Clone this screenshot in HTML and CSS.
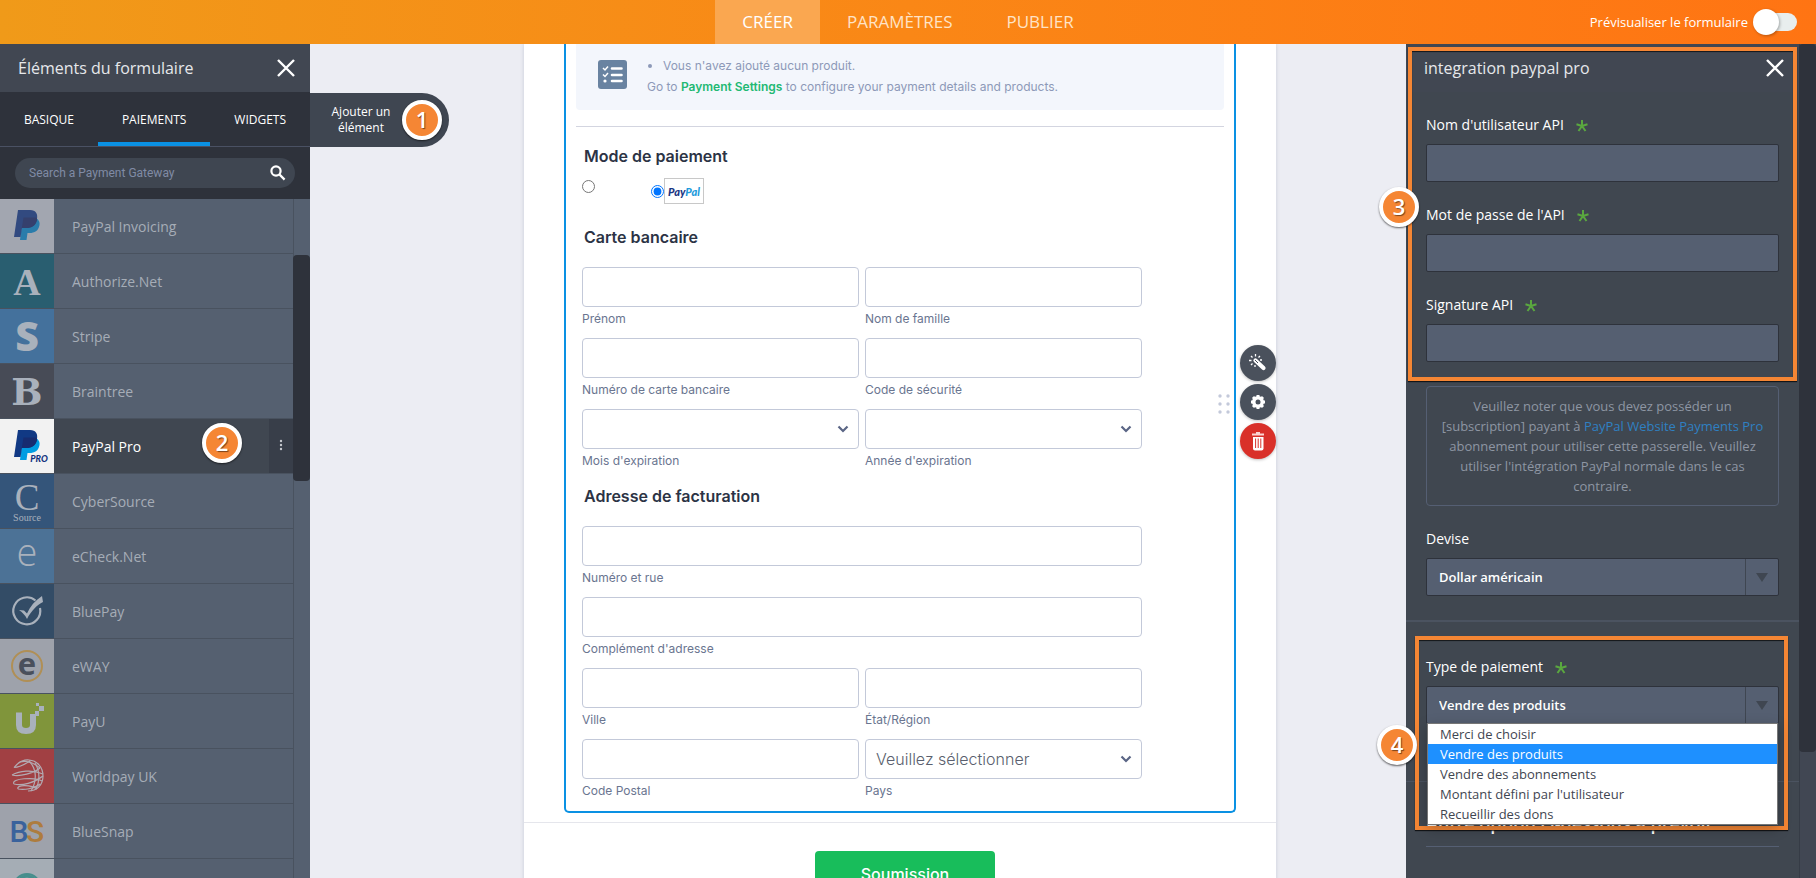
FILE: index.html
```html
<!DOCTYPE html>
<html lang="fr">
  <head>
    <meta charset="UTF-8" />
    <meta name="viewport" content="width=device-width, initial-scale=1.0" />
    <title>Créer un formulaire</title>
    <link rel="stylesheet" href="styles.css">
  </head>
  <body>
    <header class="topbar">
      <nav class="topnav">
        <a href="#" class="active">CRÉER</a>
        <a href="#">PARAMÈTRES</a>
        <a href="#">PUBLIER</a>
      </nav>
      <label class="preview">
        Prévisualiser le formulaire
        <input type="checkbox" class="toggle" />
      </label>
    </header>

    <div class="workspace">
      <!-- left panel -->
      <aside class="elements">
        <div class="panel-head">
          <h2>Éléments du formulaire</h2>
          <button class="close" aria-label="Fermer">
            <svg width="18" height="18" viewBox="0 0 18 18"><path d="M1 1L17 17M17 1L1 17" /></svg>
          </button>
        </div>
        <div class="tabs">
          <button>BASIQUE</button>
          <button class="active">PAIEMENTS</button>
          <button>WIDGETS</button>
        </div>
        <div class="search">
          <input type="text" placeholder="Search a Payment Gateway" aria-label="Search a Payment Gateway" />
          <svg width="16" height="16" viewBox="0 0 16 16"><circle cx="6" cy="6" r="4.6" /><path d="M9.6 9.6L14.6 14.6" /></svg>
        </div>
        <div class="gateways">
          <ul class="gateway-list">
            <li>
              <svg class="logo" viewBox="0 0 54 54">
                <rect width="54" height="54" fill="#a2a6b0" />
                <path d="M36 19c3 2 4 4 3.500 7-1 6-5 8-10 8h-2l-1 7h-6.500l2.500-20z" fill="#2a7cab" />
                <path d="M18 11h12c6 0 8 4 7 9-1 6-5 9-11 9h-4l-1.500 9H14z" fill="#324a80" />
                <path d="M23.500 18.500H35c2 0 2.300 1 2 2.500-1 5.500-5 8-11 8h-4.200z" fill="#35406d" />
              </svg>
              <span>PayPal Invoicing</span>
            </li>
            <li>
              <svg class="logo" viewBox="0 0 54 54">
                <rect width="54" height="54" fill="#295e70" />
                <text x="27" y="41" class="serif bold" font-size="38">A</text>
              </svg>
              <span>Authorize.Net</span>
            </li>
            <li>
              <svg class="logo" viewBox="0 0 54 54">
                <rect width="54" height="54" fill="#44719c" />
                <text x="27" y="42" class="heavy" font-size="41">S</text>
              </svg>
              <span>Stripe</span>
            </li>
            <li>
              <svg class="logo" viewBox="0 0 54 54">
                <rect width="54" height="54" fill="#474b56" />
                <text x="27" y="41" class="slab" font-size="37">B</text>
              </svg>
              <span>Braintree</span>
            </li>
            <li class="selected">
              <svg class="logo" viewBox="0 0 54 54">
                <rect width="54" height="54" fill="#f2f2f2" />
                <path d="M36 19c3 2 4 4 3.500 7-1 6-5 8-10 8h-2l-1 7h-6.500l2.500-20z" fill="#009de2" />
                <path d="M18 11h12c6 0 8 4 7 9-1 6-5 9-11 9h-4l-1.500 9H14z" fill="#113984" />
                <path d="M23.500 18.500H35c2 0 2.300 1 2 2.500-1 5.500-5 8-11 8h-4.200z" fill="#172c70" />
                <text x="39" y="43" class="pro" font-size="9">PRO</text>
              </svg>
              <span>PayPal Pro</span>
              <b class="badge badge-row">2</b>
              <button class="more" aria-label="Plus">
                <svg width="4" height="12" viewBox="0 0 4 12"><circle cx="2" cy="2" r="1.200" /><circle cx="2" cy="6" r="1.200" /><circle cx="2" cy="10" r="1.200" /></svg>
              </button>
            </li>
            <li>
              <svg class="logo" viewBox="0 0 54 54">
                <rect width="54" height="54" fill="#34557a" />
                <text x="27" y="36" class="serif" font-size="37">C</text>
                <text x="27" y="47" class="serif" font-size="10">Source</text>
              </svg>
              <span>CyberSource</span>
            </li>
            <li>
              <svg class="logo" viewBox="0 0 54 54">
                <rect width="54" height="54" fill="#4c7296" />
                <text x="27" y="37" class="thin" font-size="38">e</text>
              </svg>
              <span>eCheck.Net</span>
            </li>
            <li>
              <svg class="logo" viewBox="0 0 54 54">
                <rect width="54" height="54" fill="#334c66" />
                <path d="M35.500 16.500A13.500 13.500 0 1 0 40 24" fill="none" stroke="#a9b1bc" stroke-width="2.200" />
                <path d="M19 26l5 .5 3 3c3-7 8-13 15-17.500l1 6C37 21 31 27 27 35c-2-4-4-6-8-9z" fill="#a9b1bc" />
              </svg>
              <span>BluePay</span>
            </li>
            <li>
              <svg class="logo" viewBox="0 0 54 54">
                <rect width="54" height="54" fill="#9ea2ab" />
                <circle cx="27" cy="27" r="15" fill="none" stroke="#b08f55" stroke-width="2" />
                <text x="27" y="36" class="eway" font-size="31">e</text>
              </svg>
              <span>eWAY</span>
            </li>
            <li>
              <svg class="logo" viewBox="0 0 54 54">
                <rect width="54" height="54" fill="#80953b" />
                <path d="M19 18.500V31c0 4 2.500 6 7 6s7-2 7-6V20" fill="none" stroke="#a9b1bc" stroke-width="6" />
                <path d="M36 9h3v3h-3zM39 12h5v5h-5zM35 17h4v5h-4z" fill="#a9b1bc" />
              </svg>
              <span>PayU</span>
            </li>
            <li>
              <svg class="logo" viewBox="0 0 54 54">
                <rect width="54" height="54" fill="#a14043" />
                <g fill="none" stroke="#b3aab2" stroke-width="1.200">
                  <path d="M14 18.500c6 0 12-4 16-6.500M14 18.500c4-5 9-8 15-7.500 8 .5 14 7 14 16s-6 15-15 15" />
                  <path d="M20 13c8-2 14 1 20 6" />
                  <path d="M12 26c8 2 22-2 28-7M12 26c7-4 20-6 31-1" />
                  <path d="M14 35c-4-6 22-7 28-3M14 35c8 2 20-1 29-8" />
                  <path d="M18 40c-2-5 14-4 19 0M18 40c6 1 16 0 22-5" />
                  <path d="M29 12c8 8 8 20 2 30M35 14c5 8 5 18 1 26" />
                </g>
              </svg>
              <span>Worldpay UK</span>
            </li>
            <li>
              <svg class="logo" viewBox="0 0 54 54">
                <rect width="54" height="54" fill="#9ea2ab" />
                <text x="19" y="38" class="snap" font-size="30" fill="#3a629c">B</text>
                <text x="35" y="38" class="snap" font-size="30" fill="#ad7c3e">S</text>
              </svg>
              <span>BlueSnap</span>
            </li>
            <li>
              <svg class="logo" viewBox="0 0 54 54">
                <rect width="54" height="54" fill="#a5adb5" />
                <g fill="none" stroke="#478e8c" stroke-width="2">
                  <circle cx="27" cy="28" r="13" />
                  <path d="M18 22c5-6 14-6 19 2M20 19c6-5 14-2 17 4" />
                </g>
              </svg>
              <span></span>
            </li>
          </ul>
          <div class="scroll scroll-left"></div>
        </div>
        <button class="add-element">
          <span>Ajouter un élément</span>
          <b class="badge">1</b>
        </button>
      </aside>

      <!-- form -->
      <main class="stage">
        <form class="form-card">
          <div class="question">
            <div class="notice">
              <svg width="29" height="29" viewBox="0 0 29 29">
                <rect width="29" height="29" rx="3" fill="#6983a1" />
                <path d="M5 8l2 2 3-3.500M5 14.500l2 2 3-3.500" fill="none" stroke="#fff" stroke-width="1.500" />
                <path d="M14 8.500h9.500M14 15h9.500M14 21h9.500" stroke="#fff" stroke-width="2.600" stroke-linecap="round" />
                <circle cx="7" cy="21" r="1.600" fill="#fff" />
              </svg>
              <div>
                <ul>
                  <li>Vous n'avez ajouté aucun produit.</li>
                </ul>
                <p>Go to <a href="#">Payment Settings</a> to configure your payment details and products.</p>
              </div>
            </div>
            <hr />
            <div class="fields">
              <h3>Mode de paiement</h3>
              <div class="methods">
                <input type="radio" name="method" aria-label="Carte bancaire" />
                <label>
                  <input type="radio" name="method" checked />
                  <span class="paypal"><i>Pay</i><i>Pal</i></span>
                </label>
              </div>
              <h3>Carte bancaire</h3>
              <div class="grid">
                <label><input type="text" />Prénom</label>
                <label><input type="text" />Nom de famille</label>
                <label><input type="text" />Numéro de carte bancaire</label>
                <label><input type="text" />Code de sécurité</label>
                <label>
                  <span class="drop"><select><option></option></select><svg width="12" height="8" viewBox="0 0 12 8"><path d="M1.500 1.500L6 6L10.500 1.500" /></svg></span>
                  Mois d'expiration
                </label>
                <label>
                  <span class="drop"><select><option></option></select><svg width="12" height="8" viewBox="0 0 12 8"><path d="M1.500 1.500L6 6L10.500 1.500" /></svg></span>
                  Année d'expiration
                </label>
              </div>
              <h3>Adresse de facturation</h3>
              <div class="grid">
                <label class="wide"><input type="text" />Numéro et rue</label>
                <label class="wide"><input type="text" />Complément d'adresse</label>
                <label><input type="text" />Ville</label>
                <label><input type="text" />État/Région</label>
                <label><input type="text" />Code Postal</label>
                <label>
                  <span class="drop"><select><option>Veuillez sélectionner</option></select><svg width="12" height="8" viewBox="0 0 12 8"><path d="M1.500 1.500L6 6L10.500 1.500" /></svg></span>
                  Pays
                </label>
              </div>
            </div>
            <svg class="drag" width="12" height="22" viewBox="0 0 12 22">
              <circle cx="2" cy="3" r="1.700" /><circle cx="10" cy="3" r="1.700" />
              <circle cx="2" cy="11" r="1.700" /><circle cx="10" cy="11" r="1.700" />
              <circle cx="2" cy="19" r="1.700" /><circle cx="10" cy="19" r="1.700" />
            </svg>
            <div class="actions">
              <button type="button" aria-label="Assistant">
                <svg width="20" height="20" viewBox="0 0 20 20">
                  <path d="M7.500 7.500L15.500 15" stroke="#fff" stroke-width="4.200" stroke-linecap="round" />
                  <path d="M7 7l3 3" stroke="#4a515c" stroke-width="1" />
                  <path d="M7.500 1v2.500M3 3l1.500 1.500M1 7.500h2.500M3 12l1.500-1.500M12 3l-1.500 1.500M12 7h2M7 12v2" stroke="#fff" stroke-width="1.300" />
                </svg>
              </button>
              <button type="button" aria-label="Propriétés">
                <svg width="16" height="16" viewBox="0 0 16 16">
                  <circle cx="8" cy="8" r="6" fill="#fff" />
                  <path d="M8 1v14M1 8h14M3 3l10 10M13 3L3 13" stroke="#fff" stroke-width="3" />
                  <circle cx="8" cy="8" r="2.500" fill="#4a515c" />
                </svg>
              </button>
              <button type="button" class="delete" aria-label="Supprimer">
                <svg width="14" height="19" viewBox="0 0 14 19">
                  <path d="M5 1h4M1 2.600h12" stroke="#fbd5d3" stroke-width="2" />
                  <path d="M2 5h10.500v11.500a2 2 0 0 1-2 2H4a2 2 0 0 1-2-2z" fill="#fff" />
                  <path d="M4.600 6.500v9.500M7.200 6.500v9.500M9.800 6.500v9.500" stroke="#d93029" stroke-width="1" />
                </svg>
              </button>
            </div>
          </div>
          <div class="submit-row">
            <button type="button" class="submit">Soumission</button>
          </div>
        </form>
      </main>

      <!-- right panel -->
      <aside class="props">
        <div class="props-body">
          <section class="credentials">
            <div class="panel-head">
              <h2>integration paypal pro</h2>
              <button class="close" aria-label="Fermer">
                <svg width="18" height="18" viewBox="0 0 18 18"><path d="M1 1L17 17M17 1L1 17" /></svg>
              </button>
            </div>
            <div class="field">
              <label for="api-user">Nom d'utilisateur API <svg class="star" viewBox="0 0 12 12"><path d="M6 6V0M6 6L.5 4.300M6 6L11.500 4.300M6 6L2.500 11M6 6L9.500 11" /></svg></label>
              <input type="text" id="api-user" />
            </div>
            <div class="field">
              <label for="api-pass">Mot de passe de l'API <svg class="star" viewBox="0 0 12 12"><path d="M6 6V0M6 6L.5 4.300M6 6L11.500 4.300M6 6L2.500 11M6 6L9.500 11" /></svg></label>
              <input type="text" id="api-pass" />
            </div>
            <div class="field">
              <label for="api-sign">Signature API <svg class="star" viewBox="0 0 12 12"><path d="M6 6V0M6 6L.5 4.300M6 6L11.500 4.300M6 6L2.500 11M6 6L9.500 11" /></svg></label>
              <input type="text" id="api-sign" />
            </div>
            <div class="frame frame-api"></div>
            <b class="badge badge-api">3</b>
          </section>

          <section class="currency">
            <p class="note">Veuillez noter que vous devez posséder un [subscription] payant à <a href="#">PayPal Website Payments Pro</a> abonnement pour utiliser cette passerelle. Veuillez utiliser l'intégration PayPal normale dans le cas contraire.</p>
            <div class="field">
              <label for="currency">Devise</label>
              <div class="picker">
                <select id="currency"><option>Dollar américain</option></select>
                <span class="arrow"></span>
              </div>
            </div>
          </section>

          <section class="payment-type">
            <div class="field">
              <label for="type">Type de paiement <svg class="star" viewBox="0 0 12 12"><path d="M6 6V0M6 6L.5 4.300M6 6L11.500 4.300M6 6L2.500 11M6 6L9.500 11" /></svg></label>
              <div class="picker">
                <select id="type"><option>Vendre des produits</option></select>
                <span class="arrow"></span>
                <ul class="options" role="listbox">
                  <li>Merci de choisir</li>
                  <li class="current">Vendre des produits</li>
                  <li>Vendre des abonnements</li>
                  <li>Montant défini par l'utilisateur</li>
                  <li>Recueillir des dons</li>
                </ul>
              </div>
            </div>
            <div class="frame frame-type"></div>
            <b class="badge badge-type">4</b>
          </section>

          <section class="extra">
            <h3>Autre option ci-dessous à prévoir</h3>
          </section>
        </div>
        <div class="scroll scroll-right"></div>
      </aside>
    </div>
  </body>
</html>
```
FILE: styles.css
```css
* {
  box-sizing: border-box;
}
body {
  margin: 0;
  height: 100vh;
  display: flex;
  flex-direction: column;
  overflow: hidden;
  background: #ecedf3;
  font-family: "Open Sans", "Noto Sans", sans-serif;
  font-size: 14px;
}
button,
input,
select {
  font-family: inherit;
  margin: 0;
}
button {
  border: none;
  background: none;
  padding: 0;
  cursor: pointer;
}
h2,
h3,
p,
ul {
  margin: 0;
  padding: 0;
}
ul {
  list-style: none;
}

/* top bar */
.topbar {
  flex: none;
  height: 44px;
  display: grid;
  grid-template-columns: 1fr auto 1fr;
  background: linear-gradient(to right, #f09a19, #fa8716 50%, #ff7413);
}
.topnav {
  grid-column: 2;
  display: flex;
}
.topnav a {
  padding: 0 27px;
  line-height: 44px;
  font-size: 17px;
  color: #ffe3c6;
  text-decoration: none;
}
.topnav a.active {
  background: #faa750;
  color: #fff;
}
.preview {
  display: flex;
  align-items: center;
  justify-content: flex-end;
  gap: 12px;
  padding-right: 19px;
  font-size: 13px;
  color: #fff;
}
.toggle {
  appearance: none;
  position: relative;
  width: 37px;
  height: 18px;
  border-radius: 9px;
  background: #e8eeee;
}
.toggle::before {
  content: "";
  position: absolute;
  left: -7px;
  top: -4px;
  width: 26px;
  height: 26px;
  border-radius: 50%;
  background: #fff;
  box-shadow: 1px 1px 3px rgba(0, 0, 0, 0.3);
}

.workspace {
  flex: 1;
  min-height: 0;
  display: flex;
}

/* panels */
.panel-head {
  height: 48px;
  display: flex;
  align-items: center;
  justify-content: space-between;
  padding: 0 15px 0 18px;
  background: #414752;
}
.panel-head h2 {
  font-size: 16px;
  font-weight: 400;
  color: #e6e8eb;
}
.close svg {
  display: block;
  fill: none;
  stroke: #fff;
  stroke-width: 2.4;
}
.elements {
  position: relative;
  z-index: 1;
  flex: none;
  width: 310px;
  display: flex;
  flex-direction: column;
  background: #2e323b;
}
.tabs {
  display: flex;
  height: 55px;
  border-bottom: 1px solid #4a5163;
}
.tabs button {
  flex: 1 1 auto;
  font-size: 12px;
  font-weight: 500;
  color: #fff;
  border-top: 4px solid transparent;
  border-bottom: 4px solid transparent;
}
.tabs button.active {
  border-bottom-color: #0a91e3;
}
.search {
  display: flex;
  align-items: center;
  margin: 11px 15px 11px;
  height: 30px;
  padding: 0 9px 0 14px;
  border-radius: 15px;
  background: #3f4651;
}
.search input {
  flex: 1;
  border: none;
  outline: none;
  padding: 0;
  background: none;
  font: 12px Roboto, sans-serif;
  color: #fff;
}
.search input::placeholder {
  color: #808ba5;
}
.search svg {
  fill: none;
  stroke: #fff;
  stroke-width: 2.2;
}
.gateways {
  flex: 1;
  min-height: 0;
  display: flex;
  overflow: hidden;
  background: #556070;
}
.gateway-list {
  flex: 1;
}
.gateway-list li {
  position: relative;
  display: flex;
  align-items: center;
  height: 55px;
  border-bottom: 1px solid #49525f;
  color: #a6adb7;
}
.gateway-list span {
  padding-left: 18px;
}
.logo {
  width: 54px;
  height: 54px;
  fill: #a9b1bc;
  text-anchor: middle;
}
.serif {
  font-family: "Liberation Serif", serif;
}
.bold {
  font-weight: bold;
}
.heavy {
  font-family: "Open Sans", sans-serif;
  font-weight: 800;
}
.slab {
  font-family: "DejaVu Serif", serif;
  font-weight: bold;
}
.thin {
  font-family: "Open Sans", sans-serif;
  font-weight: 300;
}
.eway {
  font-family: "Open Sans", sans-serif;
  font-weight: 700;
  fill: #4a505c;
}
.snap {
  font-family: Roboto, sans-serif;
  font-weight: 500;
}
.pro {
  font-family: Lato, sans-serif;
  font-weight: 900;
  font-style: italic;
  fill: #12337f;
}
.gateway-list .selected {
  background: #404751;
  color: #fff;
}
.more {
  margin-left: auto;
  width: 24px;
  height: 54px;
  background: #383e49;
}
.more svg {
  fill: #c5c8ce;
}
.scroll {
  flex: none;
  width: 17px;
}
.scroll::before {
  content: "";
  display: block;
  border-radius: 4px;
  background: #2e323b;
}
.scroll-left {
  padding-top: 56px;
  box-shadow: inset 1px 0 #49525f;
}
.scroll-left::before {
  height: 226px;
}
.add-element {
  position: absolute;
  left: 100%;
  top: 49px;
  width: 139px;
  height: 54px;
  display: flex;
  align-items: center;
  gap: 6px;
  padding: 0 7px 0 16px;
  border-radius: 0 27px 27px 0;
  background: #3f4651;
}
.add-element span {
  flex: 1;
  font-size: 12px;
  line-height: 16px;
  color: #fff;
}

/* numbered markers */
.badge {
  flex: none;
  width: 40px;
  height: 40px;
  border: 4px solid #fff;
  border-radius: 50%;
  background: #f58634;
  box-shadow: 0 1px 2px rgba(0, 0, 0, 0.6);
  color: #fff;
  font-size: 22px;
  font-weight: 600;
  line-height: 31px;
  text-align: center;
  text-shadow: 1px 1px 1px rgba(0, 0, 0, 0.5);
}
.badge-row {
  position: absolute;
  left: 202px;
  top: 4px;
}
.badge-api {
  position: absolute;
  left: -27px;
  top: 143px;
}
.badge-type {
  position: absolute;
  left: -29px;
  top: 103px;
}
.frame {
  position: absolute;
  border: 4px solid #f58634;
  box-shadow: 0 1px 1px rgba(0, 0, 0, 0.7), inset 0 1px 1px rgba(0, 0, 0, 0.7);
  pointer-events: none;
}
.frame-api {
  inset: 3px 2px -19px;
}
.frame-type {
  inset: 14px 11px -49px 9px;
}

/* form */
.stage {
  flex: 1;
  display: flex;
  justify-content: center;
  align-items: flex-start;
  padding-left: 84px;
  overflow: hidden;
  font-family: Inter, sans-serif;
}
.form-card {
  width: 752px;
  background: #fff;
  box-shadow: 0 0 4px rgba(60, 70, 100, 0.2);
}
.question {
  position: relative;
  margin: 0 40px 9px;
  padding: 0 10px 8px;
  border: 2px solid #0a91e3;
  border-top: none;
  border-radius: 0 0 5px 5px;
}
.notice {
  display: flex;
  gap: 20px;
  padding: 11px 22px 13px;
  border-radius: 0 0 4px 4px;
  background: #f3f6fc;
  font-size: 12px;
  line-height: 21px;
  color: #8d99b8;
}
.notice svg {
  margin-top: 5px;
}
.notice ul {
  list-style: disc;
  padding-left: 16px;
}
.notice a {
  color: #22b973;
  font-weight: 600;
  text-decoration: none;
}
hr {
  margin: 16px 0 0;
  border: none;
  border-top: 1px solid #d3d5e0;
}
.fields {
  padding: 6px 82px 0 6px;
}
.fields h3 {
  padding: 12px 0 0 2px;
  font-size: 16px;
  font-weight: 600;
  line-height: 22px;
  color: #2c3345;
}
.methods {
  display: flex;
  align-items: flex-start;
  gap: 56px;
  height: 47px;
  padding-top: 11px;
}
.methods input {
  width: 13px;
  height: 13px;
  margin-top: 2px;
}
.methods label {
  display: flex;
  align-items: center;
}
.methods label input {
  margin-top: 0;
}
.paypal {
  width: 40px;
  height: 26px;
  border: 1px solid #c8c8c8;
  font: italic 900 11px/26px Lato, sans-serif;
  text-align: center;
  color: #1b3582;
}
.paypal i + i {
  color: #1f9bdc;
}
.grid {
  display: grid;
  grid-template-columns: 1fr 1fr;
  gap: 7px 6px;
  padding-top: 19px;
}
.grid label {
  font-size: 12px;
  line-height: 24px;
  color: #6a7590;
}
.grid .wide {
  grid-column: span 2;
}
.grid input,
.grid select {
  appearance: none;
  display: block;
  width: 100%;
  height: 40px;
  padding: 0 10px;
  border: 1px solid #c3c9d9;
  border-radius: 4px;
  background: #fff;
  font-size: 16px;
  font-weight: 300;
  color: #5a5f6e;
}
.drop {
  position: relative;
  display: block;
}
.drop svg {
  position: absolute;
  right: 10px;
  top: 16px;
  fill: none;
  stroke: #5a6585;
  stroke-width: 2.2;
}
.drag {
  position: absolute;
  right: 4px;
  top: 349px;
  fill: #c3c9da;
}
.actions {
  position: absolute;
  left: 100%;
  top: 301px;
  margin-left: 6px;
  display: grid;
  gap: 3px;
}
.actions button {
  width: 36px;
  height: 36px;
  display: grid;
  place-items: center;
  border-radius: 50%;
  background: #4a515c;
  box-shadow: 0 1px 3px rgba(0, 0, 0, 0.25);
}
.actions .delete {
  background: #d93029;
}
.submit-row {
  display: flex;
  justify-content: center;
  padding: 28px 0 40px 10px;
  border-top: 1px solid #e5e6ec;
}
.submit {
  width: 180px;
  height: 46px;
  border-radius: 4px;
  background: #18bd5b;
  font-size: 16px;
  font-weight: 500;
  color: #fff;
}

/* right panel */
.props {
  flex: none;
  width: 410px;
  display: flex;
  background: #404750;
}
.props-body {
  flex: 1;
}
.scroll-right {
  background: #414753;
  box-shadow: inset 1px 0 #363c46;
}
.scroll-right::before {
  height: 708px;
}
.credentials,
.payment-type {
  position: relative;
}
.field {
  padding: 22px 20px 0;
}
.field label {
  display: flex;
  align-items: center;
  gap: 12px;
  height: 20px;
  margin-bottom: 10px;
  color: #fff;
}
.star {
  width: 12px;
  height: 12px;
  margin-top: 4px;
  stroke: #5aa83f;
  stroke-width: 2;
}
.field input,
.field select {
  appearance: none;
  display: block;
  width: 100%;
  height: 38px;
  padding: 0 12px;
  border: 1px solid #2e323b;
  border-radius: 2px;
  background: #555f71;
  font-size: 13px;
  font-weight: 600;
  color: #fff;
}
.note {
  margin: 24px 20px 0;
  padding: 9px 12px;
  border: 1px solid #555f73;
  border-radius: 4px;
  font-size: 13px;
  line-height: 20px;
  text-align: center;
  color: #8e96a3;
}
.note a {
  color: #2f80c2;
  text-decoration: none;
}
.currency {
  padding-bottom: 24px;
  border-bottom: 2px solid #4b5360;
}
.payment-type {
  z-index: 1;
  padding: 12px 0 57px;
  border-bottom: 1px solid #4b5360;
}
.picker {
  position: relative;
}
.arrow {
  position: absolute;
  right: 1px;
  top: 1px;
  width: 33px;
  height: 36px;
  display: grid;
  place-items: center;
  border-left: 1px solid #3f4651;
  pointer-events: none;
}
.arrow::before {
  content: "";
  border: 6px solid transparent;
  border-top: 9px solid #3f4651;
  border-bottom: none;
}
.options {
  position: absolute;
  z-index: 1;
  left: 1px;
  right: 1px;
  top: 37px;
  border: 1px solid #767676;
  background: #fff;
  box-shadow: 0 4px 12px rgba(0, 0, 0, 0.25);
}
.options li {
  padding-left: 12px;
  font-size: 13px;
  line-height: 20px;
  color: #3f4651;
}
.options .current {
  background: #1e90ff;
  color: #fff;
}
.extra {
  margin: 0 20px;
  padding: 29px 0 11px;
  border-bottom: 1px solid #555f73;
}
.extra h3 {
  font-size: 18px;
  font-weight: 600;
  line-height: 24px;
  color: #fff;
}
```
